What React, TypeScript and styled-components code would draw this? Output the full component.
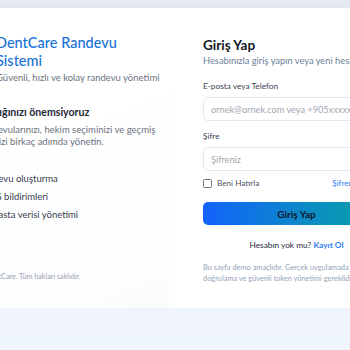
import styled, { createGlobalStyle } from "styled-components";

const GlobalStyle = createGlobalStyle`
  html, body {
    margin: 0;
    padding: 0;
    height: 100%;
  }
  body {
    font-family: Lato, "Noto Sans", "Liberation Sans", sans-serif;
    background: linear-gradient(180deg, #e6ebf2 0px, #f5f8fc 40px, #eff5fc 100%);
    overflow: hidden;
  }
`;

const Page = styled.div`
  height: 350px;
  padding-top: 8px;
  box-sizing: border-box;
  overflow: hidden;
`;

const Card = styled.div`
  width: 489px;
  height: 300px;
  margin-left: -71px;
  display: grid;
  grid-template-columns: 246px 243px;
  background: #ffffff;
  box-shadow: 0 -2px 8px rgba(15, 23, 42, 0.04);
`;

const Brand = styled.section`
  padding: 26px 28px 0 30px;
  display: flex;
  flex-direction: column;
  background: linear-gradient(160deg, #ffffff 40%, #fbfcfe 100%);
`;

const BrandHead = styled.div`
  display: flex;
  gap: 11px;
  align-items: flex-start;
`;

const Logo = styled.div`
  width: 26px;
  height: 26px;
  margin-top: 4px;
  border-radius: 7px;
  background: linear-gradient(135deg, #1769ff, #0aa3a3);
  flex-shrink: 0;
`;

const Title = styled.h1`
  margin: 0;
  font-size: 14.5px;
  line-height: 18px;
  font-weight: 500;
  color: #1672d6;
  white-space: nowrap;
`;

const Tagline = styled.p`
  margin: 2px 0 0;
  font-size: 9.5px;
  line-height: 12px;
  color: #6b7280;
  white-space: nowrap;
`;

const Heading = styled.h2`
  margin: 20px 0 0;
  display: flex;
  align-items: center;
  gap: 4px;
  font-size: 10.6px;
  line-height: 17px;
  font-weight: 700;
  color: #1f2937;
  white-space: nowrap;

  .mark {
    width: 17px;
    text-align: center;
    color: #1672d6;
  }
`;

const Lead = styled.p`
  margin: 3px 0 0;
  font-size: 9.5px;
  line-height: 12px;
  color: #6b7280;
  white-space: nowrap;
`;

const Features = styled.ul`
  margin: 25px 0 0;
  padding: 0;
  list-style: none;
  display: flex;
  flex-direction: column;
  gap: 6px;
`;

const Feature = styled.li`
  font-size: 9.5px;
  line-height: 12px;
  color: #374151;
  white-space: nowrap;
`;

const Copy = styled.p`
  margin: 51px 0 0;
  font-size: 7.2px;
  line-height: 10px;
  color: #9ca3af;
  white-space: nowrap;
`;

const Form = styled.section`
  padding: 27px 28px 0 28px;
  display: flex;
  flex-direction: column;
`;

const FormTitle = styled.h2`
  margin: 0;
  font-size: 13.5px;
  line-height: 20px;
  font-weight: 700;
  color: #111827;
`;

const FormSub = styled.p`
  margin: 0;
  font-size: 9.3px;
  line-height: 11px;
  color: #6b7f99;
  white-space: nowrap;
`;

const Label = styled.label<{ top?: number }>`
  display: block;
  margin: ${({ top }) => top ?? 10}px 0 5px;
  font-size: 8.3px;
  line-height: 11px;
  color: #374151;
`;

const Input = styled.input`
  display: block;
  width: 100%;
  height: 24px;
  box-sizing: border-box;
  padding: 0 7px;
  border: 1px solid #e5e7eb;
  border-radius: 5px;
  background: #fff;
  font-family: inherit;
  font-size: 9.2px;
  color: #111827;
  outline: none;

  &::placeholder {
    color: #a1a7b1;
  }
`;

const Row = styled.div`
  margin-top: 6px;
  display: flex;
  justify-content: space-between;
  align-items: center;
  height: 12px;
  font-size: 8.2px;
  color: #4b5563;
  white-space: nowrap;
`;

const Remember = styled.label`
  display: flex;
  align-items: center;
  gap: 5px;
`;

const Box = styled.span`
  width: 7px;
  height: 7px;
  border: 1px solid #6b7280;
  border-radius: 1.5px;
  background: #fff;
`;

const Link = styled.a<{ strong?: boolean }>`
  color: #2f7cf6;
  text-decoration: none;
  font-weight: ${({ strong }) => (strong ? 700 : 400)};
`;

const Submit = styled.button`
  margin-top: 13px;
  width: 100%;
  height: 23px;
  border: 0;
  border-radius: 5px;
  background: linear-gradient(90deg, #1363fb 0%, #0a8fc0 62%, #0aa59c 100%);
  font-family: inherit;
  font-size: 10px;
  font-weight: 700;
  color: #0f172a;
`;

const Signup = styled.p`
  margin: 15px 0 0;
  text-align: center;
  font-size: 8.3px;
  line-height: 11px;
  color: #1f2937;
`;

const Note = styled.p`
  margin: 11px 0 0;
  font-size: 7.4px;
  line-height: 11px;
  color: #94a3b8;
  white-space: nowrap;
`;

const features = [
  "Hızlı randevu oluşturma",
  "Anlık SMS bildirimleri",
  "Güvenli hasta verisi yönetimi",
];

export default function App() {
  return (
    <>
      <GlobalStyle />
      <Page>
        <Card>
          <Brand>
            <BrandHead>
              <Logo />
              <div>
                <Title>
                  DentCare Randevu
                  <br />
                  Sistemi
                </Title>
                <Tagline>Güvenli, hızlı ve kolay randevu yönetimi</Tagline>
              </div>
            </BrandHead>
            <Heading>
              <span className="mark">♥</span>
              Sağlığınızı önemsiyoruz
            </Heading>
            <Lead>
              Tüm randevularınızı, hekim seçiminizi ve geçmiş
              <br />
              işlemlerinizi birkaç adımda yönetin.
            </Lead>
            <Features>
              {features.map((f) => (
                <Feature key={f}>{f}</Feature>
              ))}
            </Features>
            <Copy>© 2025 DentCare. Tüm hakları saklıdır.</Copy>
          </Brand>
          <Form>
            <FormTitle>Giriş Yap</FormTitle>
            <FormSub>Hesabınızla giriş yapın veya yeni hesap oluşturun.</FormSub>
            <Label top={15}>E-posta veya Telefon</Label>
            <Input placeholder="ornek@ornek.com veya +905xxxxxxxxx" />
            <Label>Şifre</Label>
            <Input type="password" placeholder="Şifreniz" />
            <Row>
              <Remember>
                <Box />
                Beni Hatırla
              </Remember>
              <Link href="#">Şifremi unuttum</Link>
            </Row>
            <Submit>Giriş Yap</Submit>
            <Signup>
              Hesabın yok mu? <Link href="#" strong>Kayıt Ol</Link>
            </Signup>
            <Note>
              Bu sayfa demo amaçlıdır. Gerçek uygulamada sunucu
              <br />
              doğrulama ve güvenli token yönetimi gereklidir.
            </Note>
          </Form>
        </Card>
      </Page>
    </>
  );
}
